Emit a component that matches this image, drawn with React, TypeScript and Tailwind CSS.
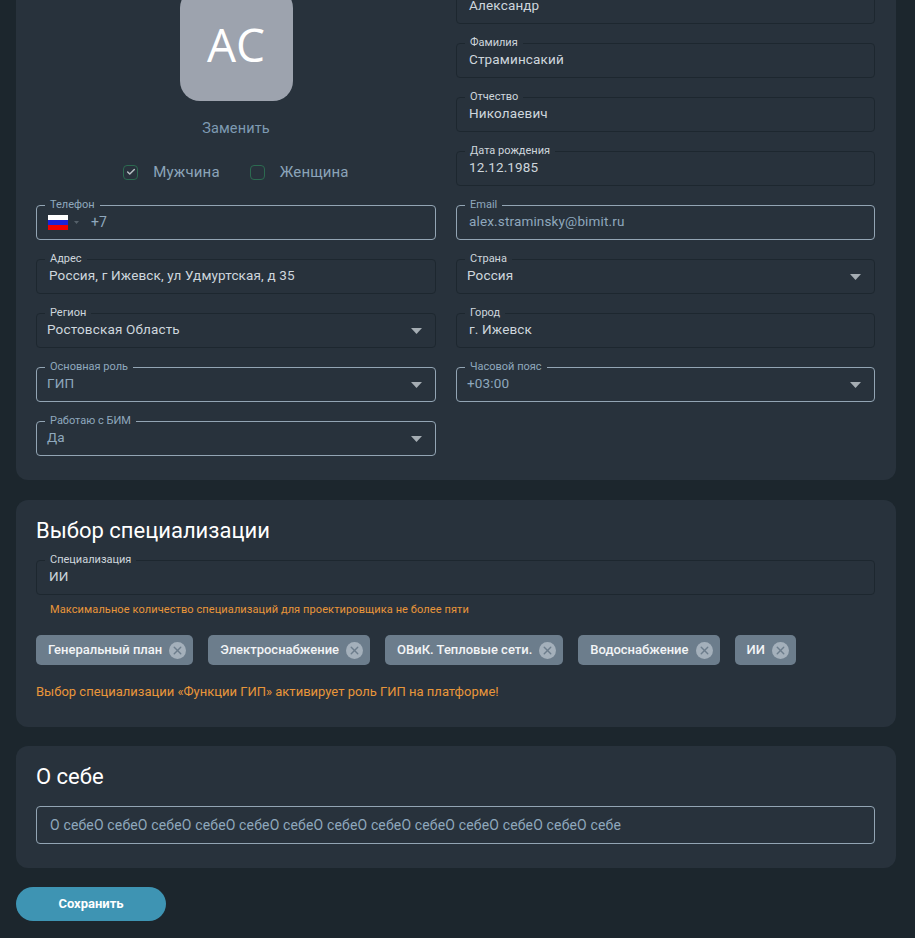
import { Check, X } from 'lucide-react';

type FieldProps = {
  label: string;
  value: string;
  active?: boolean;
  select?: boolean;
};

function Field({ label, value, active, select }: FieldProps) {
  return (
    <div
      className={`relative flex h-[35px] items-center rounded-[4px] border ${
        active ? 'border-[#93a5b4] text-[#8fa8bd]' : 'border-[#1d272f] text-[#ced6dc]'
      } ${select ? 'pl-[10px] pr-[13px]' : 'px-3'}`}
    >
      <span
        className={`absolute -top-[8px] left-[8px] bg-[#28323c] px-[5px] text-[11px] leading-[13px] ${
          active ? 'text-[#8fa8bd]' : 'text-[#ced6dc]'
        }`}
      >
        {label}
      </span>
      <span className="flex-1 -translate-y-px text-[13.5px] tracking-[0.15px]">{value}</span>
      {select && (
        <svg width="11" height="6" viewBox="0 0 11 6" className="text-[#a5adb3]">
          <path d="M0 0h11L5.5 6z" fill="currentColor" />
        </svg>
      )}
    </div>
  );
}

function PhoneField() {
  return (
    <div className="relative flex h-[35px] items-center rounded-[4px] border border-[#93a5b4] pl-[11px] text-[#8fa8bd]">
      <span className="absolute -top-[8px] left-[8px] bg-[#28323c] px-[5px] text-[11px] leading-[13px]">
        Телефон
      </span>
      <svg width="20" height="15" viewBox="0 0 20 15">
        <rect width="20" height="5" fill="#fff" />
        <rect y="5" width="20" height="5" fill="#1a22d8" />
        <rect y="10" width="20" height="5" fill="#f00000" />
      </svg>
      <svg width="5" height="3" viewBox="0 0 5 3" className="ml-[6px] text-[#55606a]">
        <path d="M0 0h5L2.5 3z" fill="currentColor" />
      </svg>
      <span className="ml-3 text-[14px]">+7</span>
    </div>
  );
}

function GenderOption({ label, checked }: { label: string; checked?: boolean }) {
  return (
    <div className="flex items-center gap-[15px]">
      <span className="flex h-[15px] w-[15px] items-center justify-center rounded-[4px] border border-[#2c6a50]">
        {checked && <Check size={10} strokeWidth={3.5} className="text-[#b9c0c5]" />}
      </span>
      <span className="text-[15px] tracking-[0.15px] text-[#8ba4b9]">{label}</span>
    </div>
  );
}

function Chip({ label }: { label: string }) {
  return (
    <div className="flex h-[30px] items-center gap-[7px] rounded-[5px] bg-[#6c7d8c] pl-3 pr-[7px]">
      <span className="text-[13px] font-medium text-[#f2f4f6]">{label}</span>
      <span className="flex h-[17px] w-[17px] items-center justify-center rounded-full bg-[#a4b0bb]">
        <X size={13} strokeWidth={2.5} className="text-[#6c7d8c]" />
      </span>
    </div>
  );
}

const chips = ['Генеральный план', 'Электроснабжение', 'ОВиК. Тепловые сети.', 'Водоснабжение', 'ИИ'];

export default function App() {
  return (
    <div className="h-[938px] overflow-hidden bg-[#1c262d] pl-4 font-['Roboto',sans-serif]">
      <div className="-mt-[31px] flex w-[880px] flex-col">
        {/* Личные данные */}
        <section className="rounded-b-[12px] bg-[#28323c] px-5 pb-6 pt-5">
          <div className="grid grid-cols-[400px_419px] gap-x-5 gap-y-[19px]">
            <div className="flex flex-col items-center">
              <div className="-mt-px flex h-[113px] w-[113px] items-center justify-center rounded-[20px] bg-[#9da3ae]">
                <span className="font-['Open_Sans',sans-serif] text-[46px] text-white">AC</span>
              </div>
              <div className="mt-[17px] text-[14.5px] tracking-[0.15px] text-[#7e9ab2]">Заменить</div>
              <div className="mt-[21px] flex gap-[30px]">
                <GenderOption label="Мужчина" checked />
                <GenderOption label="Женщина" />
              </div>
            </div>
            <div className="flex flex-col gap-[19px]">
              <Field label="Имя" value="Александр" />
              <Field label="Фамилия" value="Страминсакий" />
              <Field label="Отчество" value="Николаевич" />
              <Field label="Дата рождения" value="12.12.1985" />
            </div>
            <PhoneField />
            <Field label="Email" value="alex.straminsky@bimit.ru" active />
            <Field label="Адрес" value="Россия, г Ижевск, ул Удмуртская, д 35" />
            <Field label="Страна" value="Россия" select />
            <Field label="Регион" value="Ростовская Область" select />
            <Field label="Город" value="г. Ижевск" />
            <Field label="Основная роль" value="ГИП" active select />
            <Field label="Часовой пояс" value="+03:00" active select />
            <Field label="Работаю с БИМ" value="Да" active select />
          </div>
        </section>

        {/* Специализация */}
        <section className="mt-5 h-[227px] rounded-[12px] bg-[#28323c] px-5 pt-[16px]">
          <h2 className="text-[22px] leading-[30px] text-white">Выбор специализации</h2>
          <div className="mt-[14px] w-[839px]">
            <Field label="Специализация" value="ИИ" />
          </div>
          <p className="ml-[14px] mt-[8px] text-[11px] leading-[14px] tracking-[0.1px] text-[#e8963a]">
            Максимальное количество специализаций для проектировщика не более пяти
          </p>
          <div className="mt-[18px] flex gap-[15px]">
            {chips.map((chip) => (
              <Chip key={chip} label={chip} />
            ))}
          </div>
          <p className="mt-[19px] text-[13px] leading-[16px] text-[#e8963a]">
            Выбор специализации «Функции ГИП» активирует роль ГИП на платформе!
          </p>
        </section>

        {/* О себе */}
        <section className="mt-[19px] h-[122px] rounded-[12px] bg-[#28323c] px-5 pt-[16px]">
          <h2 className="text-[22px] leading-[30px] text-white">О себе</h2>
          <div className="mt-[14px] flex h-[38px] w-[839px] items-center rounded-[4px] border border-[#93a5b4] px-[13px] text-[14px] tracking-[0.15px] text-[#8fa8bd]">
            {'О себе'.repeat(13)}
          </div>
        </section>

        <button className="mt-[19px] h-[34px] w-[150px] rounded-full bg-[#3e94b3] text-[13px] font-bold text-white">
          Сохранить
        </button>
      </div>
    </div>
  );
}
